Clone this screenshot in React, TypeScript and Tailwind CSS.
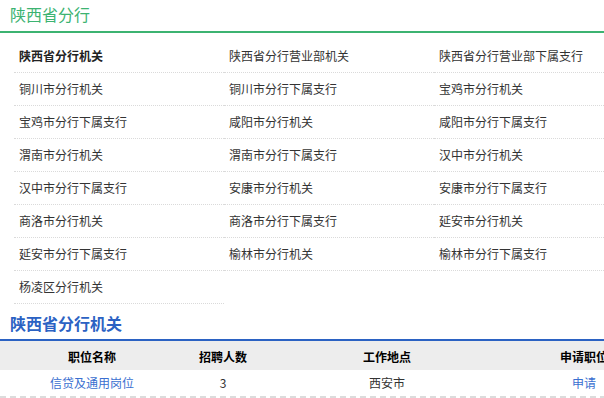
import React from "react";

const branches = [
  "陕西省分行机关",
  "陕西省分行营业部机关",
  "陕西省分行营业部下属支行",
  "铜川市分行机关",
  "铜川市分行下属支行",
  "宝鸡市分行机关",
  "宝鸡市分行下属支行",
  "咸阳市分行机关",
  "咸阳市分行下属支行",
  "渭南市分行机关",
  "渭南市分行下属支行",
  "汉中市分行机关",
  "汉中市分行下属支行",
  "安康市分行机关",
  "安康市分行下属支行",
  "商洛市分行机关",
  "商洛市分行下属支行",
  "延安市分行机关",
  "延安市分行下属支行",
  "榆林市分行机关",
  "榆林市分行下属支行",
  "杨凌区分行机关",
];

const jobs = [{ name: "信贷及通用岗位", count: 3, place: "西安市" }];

export default function App() {
  return (
    <div
      className="w-[604px] h-[398px] overflow-hidden bg-white text-[#333]"
      style={{ fontFamily: '"Noto Sans CJK SC", "Noto Sans", sans-serif' }}
    >
      {/* 分行列表 */}
      <div className="h-[33px] border-b-2 border-[#3cb371] pl-[10px]">
        <h2 className="text-[16px] leading-[28px] text-[#3cb371]">陕西省分行</h2>
      </div>

      <div className="ml-[14px] mt-[7px] grid w-[630px] grid-cols-[210px_210px_210px]">
        {branches.map((b, i) => (
          <div
            key={b}
            className={`h-[33px] border-b border-dotted border-[#dadada] pl-[5px] text-[12px] leading-[32px] ${
              i === 0 ? "font-bold text-[#222]" : ""
            }`}
          >
            {b}
          </div>
        ))}
      </div>

      {/* 岗位表 */}
      <div className="h-[37px] border-b-2 border-[#2b62c3] pl-[10px] pt-[8px]">
        <h2 className="text-[16px] leading-[22px] font-bold text-[#2b62c3]">陕西省分行机关</h2>
      </div>

      <div className="w-[656px]">
        <div className="grid h-[29px] grid-cols-[184px_78px_250px_144px] bg-[#ededed] text-center text-[12px] font-bold leading-[31px] text-black">
          <div>职位名称</div>
          <div>招聘人数</div>
          <div>工作地点</div>
          <div>申请职位</div>
        </div>
        {jobs.map((j) => (
          <div
            key={j.name}
            className="grid h-[28px] grid-cols-[184px_78px_250px_144px] border-b-2 border-dashed border-[#dcdcdc] text-center text-[12px] leading-[26px]"
          >
            <div className="text-[#3a6fd0]">{j.name}</div>
            <div>{j.count}</div>
            <div>{j.place}</div>
            <div className="text-[#3a6fd0]">申请</div>
          </div>
        ))}
      </div>
    </div>
  );
}
